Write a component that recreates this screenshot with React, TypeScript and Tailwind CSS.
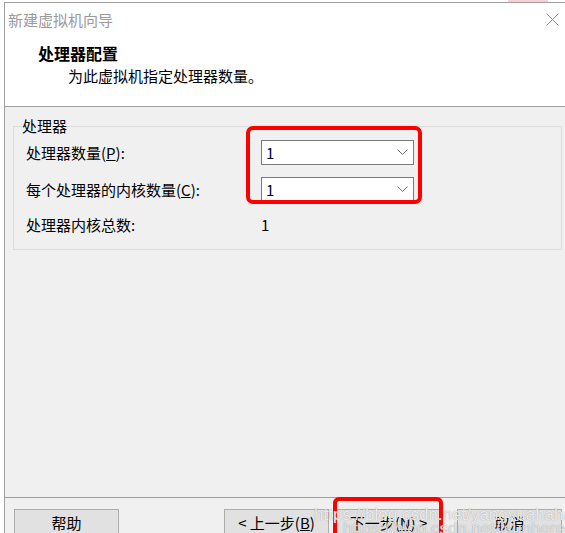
import React from "react";

const font = { fontFamily: '"Noto Sans CJK SC", "Microsoft YaHei", sans-serif' };

const Chevron = () => (
  <svg width="11" height="7" viewBox="0 0 11 7" className="shrink-0">
    <polyline points="0.5,0.5 5.5,5.5 10.5,0.5" fill="none" stroke="#6e6e6e" strokeWidth="1" />
  </svg>
);

const Select = ({ value }: { value: string }) => (
  <div className="flex h-[25px] w-[153px] items-center justify-between border border-[#7a7a7a] bg-white pl-[4px] pr-[5px]">
    <span className="text-[15px] leading-none text-[#000033]">{value}</span>
    <Chevron />
  </div>
);

const Button = ({ children, className = "" }: { children: React.ReactNode; className?: string }) => (
  <button
    className={`flex h-[26px] w-[105px] items-center justify-center border border-[#adadad] bg-[#e1e1e1] text-[15px] leading-none text-black ${className}`}
  >
    {children}
  </button>
);

const App = () => {
  return (
    <div className="relative h-[533px] w-[565px] overflow-hidden bg-white" style={font}>
      {/* pink strip of the hovered close area, cropped */}
      <div className="absolute left-[508px] top-0 h-[2px] w-[40px] bg-[#f8d0d0]" />

      <div className="ml-[4px] mt-[2px] border-l border-t border-[#a0a0a0]">
        {/* Title bar */}
        <div className="flex h-[33px] items-center justify-between pl-[3px] pr-[6px]">
          <span className="text-[15px] leading-none text-[#9a9a9a]">新建虚拟机向导</span>
          <svg width="13" height="13" viewBox="0 0 13 13">
            <path d="M0.5 0.5 L12.5 12.5 M12.5 0.5 L0.5 12.5" stroke="#8a8a8a" strokeWidth="1" />
          </svg>
        </div>

        {/* Header */}
        <div className="box-border h-[71px] border-b border-[#a0a0a0] bg-white pt-[7px]">
          <div className="pl-[33px] text-[16px] font-bold leading-[20px] text-black">处理器配置</div>
          <div className="mt-[3px] pl-[63px] text-[15px] leading-[20px] text-black">
            为此虚拟机指定处理器数量。
          </div>
        </div>

        {/* Body */}
        <div className="h-[391px] border-b border-[#a0a0a0] bg-[#f0f0f0] pl-[8px] pr-[3px] pt-[9px]">
          <fieldset className="border border-[#dcdcdc] pb-[14px] pl-[8px]">
            <legend className="text-[15px] leading-[20px] text-black">处理器</legend>
            <div className="flex flex-col pl-[4px] pt-[4px] text-[15px] leading-[20px] text-black">
              <div className="flex h-[25px] items-center">
                <span className="w-[235px]">
                  处理器数量(<span className="underline">P</span>):
                </span>
                <Select value="1" />
              </div>
              <div className="mt-[12px] flex h-[25px] items-center">
                <span className="w-[235px]">
                  每个处理器的内核数量(<span className="underline">C</span>):
                </span>
                <Select value="1" />
              </div>
              <div className="mt-[13px] flex h-[20px] items-center">
                <span className="w-[235px]">处理器内核总数:</span>
                <span>1</span>
              </div>
            </div>
          </fieldset>
        </div>

        {/* Footer */}
        <div className="flex bg-[#f0f0f0] pl-[9px] pt-[11px] pb-[10px]">
          <Button>帮助</Button>
          <Button className="ml-[105px]">
            &lt; 上一步(<span className="underline">B</span>)
          </Button>
          <Button className="ml-[7px]">
            下一步(<span className="underline">N</span>) &gt;
          </Button>
          <Button className="ml-[16px]">取消</Button>
        </div>
      </div>

      {/* Red annotation boxes */}
      <div className="pointer-events-none absolute left-[246px] top-[126px] h-[78px] w-[176px] rounded-[7px] border-[4px] border-[#ff0000]" />
      <div className="pointer-events-none absolute left-[333px] top-[497px] h-[50px] w-[110px] rounded-[6px] border-[4px] border-[#ff0000]" />

      {/* Watermark */}
      <div
        className="pointer-events-none absolute left-[314px] top-[505px] whitespace-nowrap text-[17px] leading-[20px] text-white/80"
        style={{ fontFamily: '"Liberation Sans", Arial, sans-serif', textShadow: "0 0 1px #8a8a8a" }}
      >
        https://blog.csdn.net/yangyuahaha
      </div>
      <div
        className="pointer-events-none absolute left-[343px] top-[519px] whitespace-nowrap text-[17px] leading-[20px] text-white/70"
        style={{ fontFamily: '"Liberation Sans", Arial, sans-serif', textShadow: "0 0 1px #8a8a8a" }}
      >
        https://blog.csdn.net/isunhere_x
      </div>
    </div>
  );
};

export default App;
